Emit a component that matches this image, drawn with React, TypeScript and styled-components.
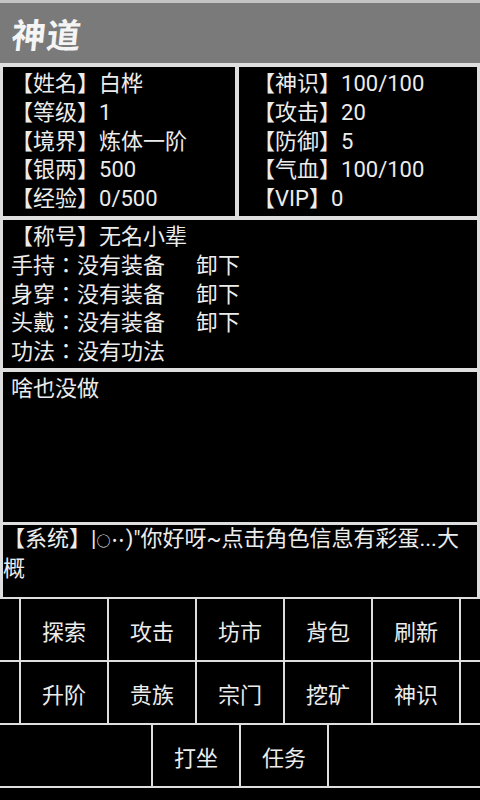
import styled, { createGlobalStyle } from 'styled-components';

const GlobalStyle = createGlobalStyle`
  html, body {
    margin: 0;
    padding: 0;
    background: #000;
  }
  * {
    box-sizing: border-box;
  }
`;

const Screen = styled.div`
  width: 480px;
  height: 800px;
  display: flex;
  flex-direction: column;
  background: #dedede;
  color: #ececec;
  font-family: Roboto, 'Noto Sans CJK TC', sans-serif;
  overflow: hidden;
`;

const TopStrip = styled.div`
  height: 3px;
  background: #c4c4c4;
`;

const TitleBar = styled.header`
  height: 60px;
  background: #7a7a7a;
  display: flex;
  align-items: center;
  padding-left: 12px;
`;

const Title = styled.h1`
  margin: 0;
  font-family: 'Noto Sans CJK SC', serif;
  font-size: 34px;
  font-weight: 700;
  color: #f4f4f4;
  letter-spacing: 1px;
  transform: skewX(-6deg);
`;

const Body = styled.main`
  display: flex;
  flex-direction: column;
  padding: 4px 3px 0;
  gap: 4px;
`;

const StatsRow = styled.div`
  display: flex;
  gap: 4px;
  height: 149px;
`;

const Panel = styled.section<{ $h?: number; $pl?: number; $pt?: number; $grow?: boolean }>`
  background: #000;
  height: ${p => (p.$h ? `${p.$h}px` : 'auto')};
  flex: ${p => (p.$grow ? 1 : 'none')};
  padding: ${p => p.$pt ?? 3}px 0 0 ${p => p.$pl ?? 8}px;
  font-size: 22px;
  line-height: 28.75px;
  overflow: hidden;
`;

const Line = styled.div`
  white-space: nowrap;
`;

const Slot = styled.span`
  display: inline-block;
  width: 185px;
`;

const SystemPanel = styled.section`
  background: #000;
  height: 72px;
  margin-top: -1px;
  padding: 0;
  font-size: 22px;
  line-height: 27px;
  overflow: hidden;
`;

const Dots = styled.span`
  font-size: 14px;
  letter-spacing: 2px;
`;

const Grid = styled.nav`
  display: flex;
  flex-direction: column;
  gap: 2px;
  margin-top: 2px;
  flex: 1;
`;

const ButtonRow = styled.div<{ $last?: boolean }>`
  display: flex;
  gap: 2px;
  height: ${p => (p.$last ? 'auto' : '61px')};
  flex: ${p => (p.$last ? 1 : 'none')};
`;

const Filler = styled.div`
  flex: 1;
  background: #000;
`;

const Button = styled.button`
  width: 86px;
  border: none;
  padding: 0;
  background: #000;
  color: #ececec;
  font-family: 'Noto Sans CJK TC', sans-serif;
  font-size: 22px;
  cursor: pointer;
`;

const left = [
  ['姓名', '白桦'],
  ['等级', '1'],
  ['境界', '炼体一阶'],
  ['银两', '500'],
  ['经验', '0/500'],
];

const right = [
  ['神识', '100/100'],
  ['攻击', '20'],
  ['防御', '5'],
  ['气血', '100/100'],
  ['VIP', '0'],
];

const gear = [
  ['手持', '没有装备', '卸下'],
  ['身穿', '没有装备', '卸下'],
  ['头戴', '没有装备', '卸下'],
  ['功法', '没有功法', ''],
];

const rows = [
  ['探索', '攻击', '坊市', '背包', '刷新'],
  ['升阶', '贵族', '宗门', '挖矿', '神识'],
  ['打坐', '任务'],
];

export default function App() {
  return (
    <>
      <GlobalStyle />
      <Screen>
        <TopStrip />
        <TitleBar>
          <Title>神道</Title>
        </TitleBar>
        <Body>
          <StatsRow>
            <Panel $grow $pl={8}>
              {left.map(([k, v]) => (
                <Line key={k}>【{k}】{v}</Line>
              ))}
            </Panel>
            <Panel $grow $pl={14}>
              {right.map(([k, v]) => (
                <Line key={k}>【{k}】{v}</Line>
              ))}
            </Panel>
          </StatsRow>
          <Panel $h={148}>
            <Line>【称号】无名小辈</Line>
            {gear.map(([slot, item, action]) => (
              <Line key={slot}>
                <Slot>{slot}：{item}</Slot>
                {action}
              </Line>
            ))}
          </Panel>
          <Panel $h={150}>
            <Line>啥也没做</Line>
          </Panel>
          <SystemPanel>
            【系统】|<Dots>○••</Dots>)"你好呀~点击角色信息有彩蛋...大概
          </SystemPanel>
        </Body>
        <Grid>
          {rows.map((row, i) => (
            <ButtonRow key={i}>
              <Filler />
              {row.map(label => (
                <Button key={label}>{label}</Button>
              ))}
              <Filler />
            </ButtonRow>
          ))}
          <ButtonRow $last>
            <Filler />
          </ButtonRow>
        </Grid>
      </Screen>
    </>
  );
}
